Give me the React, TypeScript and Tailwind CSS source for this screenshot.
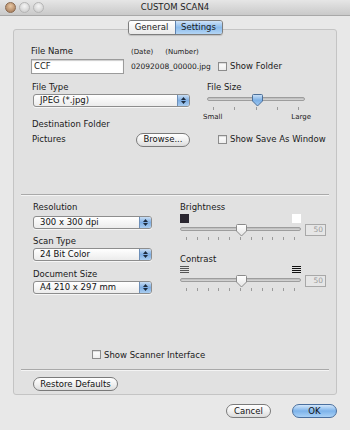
import React from "react";

const font = "font-['DejaVu_Sans',sans-serif]";

const Checkbox = ({ label }: { label: string }) => (
  <div className="flex items-center">
    <div className="h-[9px] w-[9px] border border-[#8c8c8c] bg-gradient-to-b from-white to-[#eeeeee] shadow-[inset_0_1px_1px_rgba(0,0,0,0.15)]" />
    <span className="ml-[3px] text-[8.5px] text-[#1a1a1a]">{label}</span>
  </div>
);

const Popup = ({ value, width }: { value: string; width: string }) => (
  <div
    className={`flex h-[13px] items-stretch overflow-hidden rounded-[3px] border border-[#8d8d8d] bg-gradient-to-b from-white to-[#ececec] shadow-[0_1px_0_rgba(255,255,255,0.7)] ${width}`}
  >
    <div className="flex-1 pl-[6px] text-[8.5px] leading-[11px] text-[#111]">
      {value}
    </div>
    <div className="flex w-[12px] flex-col items-center justify-center gap-[1px] border-l border-[#6d8fb8] bg-gradient-to-b from-[#c8ddf3] via-[#7faee3] to-[#a9cdf0]">
      <svg width="5" height="3" viewBox="0 0 5 3">
        <path d="M2.5 0 L5 3 L0 3 Z" fill="#1c2b3e" />
      </svg>
      <svg width="5" height="3" viewBox="0 0 5 3">
        <path d="M0 0 L5 0 L2.5 3 Z" fill="#1c2b3e" />
      </svg>
    </div>
  </div>
);

const Button = ({
  label,
  width,
  blue,
}: {
  label: string;
  width: string;
  blue?: boolean;
}) => (
  <div
    className={`flex h-[14px] items-center justify-center rounded-full border text-[8.5px] text-[#111] ${width} ${
      blue
        ? "border-[#4a6f9e] bg-gradient-to-b from-[#d2e6fa] via-[#7db3ea] to-[#a9d1f6]"
        : "border-[#7a7a7a] bg-gradient-to-b from-white via-[#f1f1f1] to-[#dcdcdc]"
    }`}
  >
    {label}
  </div>
);

const Ticks = ({ count }: { count: number }) => (
  <div className="flex justify-between">
    {Array.from({ length: count }).map((_, i) => (
      <div key={i} className="h-[3px] w-[1px] bg-[#9a9a9a]" />
    ))}
  </div>
);

const Thumb = ({ blue }: { blue?: boolean }) => (
  <svg width="11" height="13" viewBox="0 0 11 13">
    <path
      d="M1.5 0.5 H9.5 Q10.5 0.5 10.5 1.5 V7 L5.5 12 L0.5 7 V1.5 Q0.5 0.5 1.5 0.5 Z"
      fill={blue ? "url(#bl)" : "url(#wh)"}
      stroke={blue ? "#4c6f98" : "#8a8a8a"}
    />
    <defs>
      <linearGradient id="bl" x1="0" y1="0" x2="0" y2="1">
        <stop offset="0" stopColor="#cfe3f7" />
        <stop offset="0.5" stopColor="#7cb0e6" />
        <stop offset="1" stopColor="#9ec8f1" />
      </linearGradient>
      <linearGradient id="wh" x1="0" y1="0" x2="0" y2="1">
        <stop offset="0" stopColor="#ffffff" />
        <stop offset="1" stopColor="#e4e4e4" />
      </linearGradient>
    </defs>
  </svg>
);

const Track = ({ pos, blue }: { pos: number; blue?: boolean }) => (
  <div className="relative h-[13px]">
    <div className="absolute left-0 right-0 top-[3px] h-[4px] rounded-full border border-[#9d9d9d] bg-gradient-to-b from-[#b9b9b9] to-[#d8d8d8]" />
    <div className="absolute top-0" style={{ left: pos }}>
      <Thumb blue={blue} />
    </div>
  </div>
);

const ValueBox = () => (
  <div className="ml-[4px] h-[12px] w-[21px] border border-[#a8a8a8] bg-[#e6e6e6] pr-[2px] text-right text-[7.5px] leading-[10px] text-[#9a9a9a]">
    50
  </div>
);

const Stripes = ({ dark }: { dark?: boolean }) => (
  <div className="flex h-[8px] w-[9px] flex-col justify-between">
    {[0, 1, 2, 3].map((i) => (
      <div
        key={i}
        className={`h-[1px] w-full ${dark ? "bg-[#111]" : "bg-[#555]"}`}
      />
    ))}
  </div>
);

export default function App() {
  return (
    <div
      className={`flex h-[430px] w-[350px] flex-col bg-[#e8e8e8] text-[#1a1a1a] ${font}`}
    >
      {/* title bar */}
      <div className="relative flex h-[16px] items-center border-b border-[#a8a8a8] bg-gradient-to-b from-[#e6e6e6] to-[#c9c9c9]">
        <div className="ml-[5px] flex gap-[3px]">
          <div className="h-[11px] w-[11px] rounded-full border border-[#8a6a50] bg-[radial-gradient(circle_at_50%_35%,#e8c7a3,#9c7150)]" />
          <div className="h-[11px] w-[11px] rounded-full border border-[#b5b5b5] bg-[radial-gradient(circle_at_50%_35%,#f5f5f5,#c6c6c6)]" />
          <div className="h-[11px] w-[11px] rounded-full border border-[#b5b5b5] bg-[radial-gradient(circle_at_50%_35%,#f5f5f5,#c6c6c6)]" />
        </div>
        <div className="flex-1 pr-[44px] text-center text-[8.5px] text-[#222]">
          CUSTOM SCAN4
        </div>
      </div>

      {/* tabs */}
      <div className="relative z-10 mt-[4px] flex justify-center">
        <div className="flex h-[15px] overflow-hidden rounded-[3px] border border-[#7d7d7d] text-[8.5px] shadow-[0_1px_1px_rgba(0,0,0,0.15)]">
          <div className="flex w-[46px] items-center justify-center bg-gradient-to-b from-white to-[#e9e9e9]">
            General
          </div>
          <div className="flex w-[47px] items-center justify-center border-l border-[#5d82b0] bg-gradient-to-b from-[#cfe3f8] via-[#8cbcec] to-[#b3d5f5]">
            Settings
          </div>
        </div>
      </div>

      {/* panel */}
      <div className="mx-[13px] mt-[-6px] flex h-[366px] flex-col rounded-[3px] border border-[#c4c4c4] bg-[#e1e1e1] text-[8.5px]">
        <div className="pl-[18px] pt-[15px]">
          {/* file name row */}
          <div className="flex">
            <div className="ml-[-1px] w-[93px]">
              <div className="h-[12px] leading-[12px]">File Name</div>
              <div className="mt-[2px] h-[15px] border border-[#9b9b9b] bg-white pl-[2px] leading-[13px] shadow-[inset_0_1px_1px_rgba(0,0,0,0.2)]">
                CCF
              </div>
            </div>
            <div className="ml-[7px] w-[87px]">
              <div className="flex h-[12px] items-end text-[7px]">
                <span>(Date)</span>
                <span className="ml-[12px]">(Number)</span>
              </div>
              <div className="mt-[2px] h-[15px] text-[7.5px] leading-[15px]">
                02092008_00000.jpg
              </div>
            </div>
            <div className="mt-[14px] flex h-[15px] items-center">
              <Checkbox label="Show Folder" />
            </div>
          </div>

          {/* file type row */}
          <div className="mt-[7px] flex">
            <div className="w-[175px]">
              <div className="h-[12px] leading-[12px]">File Type</div>
              <div className="ml-[1px] mt-[1px]">
                <Popup value="JPEG (*.jpg)" width="w-[157px]" />
              </div>
            </div>
            <div className="w-[98px]">
              <div className="h-[12px] leading-[12px]">File Size</div>
              <div className="mt-[1px]">
                <Track pos={45} blue />
              </div>
              <div className="px-[6px]">
                <Ticks count={5} />
              </div>
              <div className="mt-[2px] flex justify-between text-[7px]">
                <span className="ml-[-4px]">Small</span>
                <span className="mr-[-6px]">Large</span>
              </div>
            </div>
          </div>

          {/* destination row */}
          <div className="mt-[-5px] h-[12px] leading-[12px]">
            Destination Folder
          </div>
          <div className="mt-[2px] flex h-[16px] items-center">
            <div className="w-[104px]">Pictures</div>
            <Button label="Browse..." width="w-[54px]" />
            <div className="ml-[28px]">
              <Checkbox label="Show Save As Window" />
            </div>
          </div>
        </div>

        <div className="mx-[7px] mt-[46px] h-[1px] bg-[#a9a9a9] shadow-[0_1px_0_#f4f4f4]" />

        {/* lower section */}
        <div className="flex pl-[19px] pt-[6px]">
          <div className="w-[147px]">
            <div className="h-[12px] leading-[12px]">Resolution</div>
            <div className="mt-[3px]">
              <Popup value="300 x 300 dpi" width="w-[119px]" />
            </div>
            <div className="mt-[6px] h-[12px] leading-[12px]">Scan Type</div>
            <div className="mt-[1px]">
              <Popup value="24 Bit Color" width="w-[119px]" />
            </div>
            <div className="mt-[7px] h-[12px] leading-[12px]">Document Size</div>
            <div className="mt-[1px]">
              <Popup value="A4  210 x 297 mm" width="w-[119px]" />
            </div>
          </div>

          <div className="w-[146px]">
            <div className="h-[12px] leading-[12px]">Brightness</div>
            <div className="mt-[1px] flex w-[121px] justify-between">
              <div className="h-[9px] w-[9px] bg-[#2a2630]" />
              <div className="h-[9px] w-[9px] bg-white" />
            </div>
            <div className="mt-[1px] flex items-center">
              <div className="w-[121px]">
                <Track pos={56} />
              </div>
              <ValueBox />
            </div>
            <div className="w-[121px] px-[6px]">
              <Ticks count={11} />
            </div>

            <div className="mt-[13px] h-[12px] leading-[12px]">Contrast</div>
            <div className="mt-[1px] flex w-[121px] justify-between">
              <Stripes />
              <Stripes dark />
            </div>
            <div className="mt-[1px] flex items-center">
              <div className="w-[121px]">
                <Track pos={56} />
              </div>
              <ValueBox />
            </div>
            <div className="w-[121px] px-[6px]">
              <Ticks count={11} />
            </div>
          </div>
        </div>

        <div className="mt-[55px] flex pl-[78px]">
          <Checkbox label="Show Scanner Interface" />
        </div>

        <div className="mx-[7px] mt-[8px] h-[1px] bg-[#a9a9a9] shadow-[0_1px_0_#f4f4f4]" />

        <div className="mt-[7px] pl-[19px]">
          <Button label="Restore Defaults" width="w-[85px]" />
        </div>
      </div>

      {/* bottom buttons */}
      <div className="mt-[9px] flex justify-end gap-[21px] pr-[13px]">
        <Button label="Cancel" width="w-[45px]" />
        <Button label="OK" width="w-[45px]" blue />
      </div>
    </div>
  );
}
